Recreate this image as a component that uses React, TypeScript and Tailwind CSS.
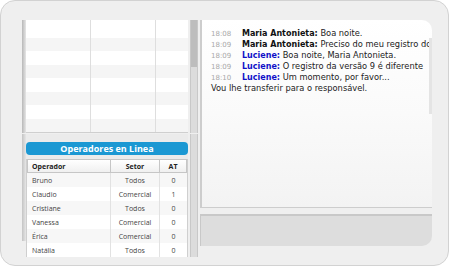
import React from 'react'

const chat = [
  { t: '18:08', name: 'Maria Antonieta:', blue: false, msg: 'Boa noite.' },
  { t: '18:09', name: 'Maria Antonieta:', blue: false, msg: 'Preciso do meu registro do sistema' },
  { t: '18:09', name: 'Luciene:', blue: true, msg: 'Boa noite, Maria Antonieta.' },
  { t: '18:09', name: 'Luciene:', blue: true, msg: 'O registro da versão 9 é diferente' },
  { t: '18:10', name: 'Luciene:', blue: true, msg: 'Um momento, por favor...' },
]

const operadores = [
  { nome: 'Bruno', setor: 'Todos', at: 0 },
  { nome: 'Claudio', setor: 'Comercial', at: 1 },
  { nome: 'Cristiane', setor: 'Todos', at: 0 },
  { nome: 'Vanessa', setor: 'Comercial', at: 0 },
  { nome: 'Érica', setor: 'Comercial', at: 0 },
  { nome: 'Natália', setor: 'Todos', at: 0 },
]

function Scrollbar({ thumb }: { thumb: number }) {
  return (
    <div className="w-[8px] h-full shrink-0 flex flex-col bg-[#dcdcdc] border-x border-[#c8c8c8]">
      <div className="bg-[#bdbdbd]" style={{ height: thumb }} />
    </div>
  )
}

export default function App() {
  return (
    <div className="w-[450px] h-[267px] bg-white">
      <div className="w-[449px] h-[266px] rounded-[15px] border border-[#d2d2d2] bg-[#efefef] flex pt-[19px] pl-[21px] pr-[16px] pb-[19px] gap-[2px]">
        {/* left column */}
        <div className="w-[176px] shrink-0 flex flex-col">
          {/* top list */}
          <div className="h-[113px] flex gap-[2px]">
            <div className="flex-1 flex">
              <div className="w-[4px] bg-gradient-to-r from-[#b8b8b8] to-[#e6e6e6]" />
              <div className="flex-1 flex flex-col bg-white border-b border-[#cfcfcf] relative">
                <div className="h-[18px] bg-white" />
                {[0, 1, 2, 3, 4, 5, 6].map(i => (
                  <div key={i} className={i % 2 === 0 ? 'h-[13.5px] bg-[#f5f5f5]' : 'h-[13.5px] bg-white'} />
                ))}
                <div className="absolute inset-0 flex">
                  <div className="w-[65px] border-r border-[#dedede]" />
                  <div className="w-[65px] border-r border-[#dedede]" />
                </div>
              </div>
            </div>
            <Scrollbar thumb={47} />
          </div>

          {/* operadores */}
          <div className="flex-1 flex gap-[2px] pt-[1px]">
            <div className="flex-1 flex">
              <div className="w-[4px] h-[107px] bg-gradient-to-r from-[#c4c4c4] to-[#e6e6e6]" />
              <div className="flex-1 flex flex-col pt-[8px] bg-[#ebebeb]">
                <div className="h-[13px] rounded-[4px] bg-[#1b98d3] flex items-center justify-center text-white font-bold text-[9px] leading-none font-['Open_Sans',sans-serif]">
                  Operadores en Linea
                </div>
                <div className="mt-[4px] flex-1 flex flex-col bg-white border-x border-[#cfcfcf] overflow-hidden font-['Open_Sans',sans-serif] text-[7px] leading-none text-[#444]">
                  <div className="h-[14px] flex border border-[#c6c6c6] bg-gradient-to-b from-white to-[#f0f0f0] font-bold text-[#222] shrink-0">
                    <div className="w-[83px] pl-[4px] flex items-center border-r border-[#c6c6c6]">Operador</div>
                    <div className="w-[49px] flex items-center justify-center border-r border-[#c6c6c6]">Setor</div>
                    <div className="flex-1 flex items-center justify-center">AT</div>
                  </div>
                  {operadores.map((o, i) => (
                    <div key={o.nome} className={`h-[14px] flex shrink-0 ${i % 2 === 0 ? 'bg-[#f7f7f7]' : 'bg-white'}`}>
                      <div className="w-[84px] pl-[5px] flex items-center border-r border-[#e2e2e2]">{o.nome}</div>
                      <div className="w-[49px] flex items-center justify-center border-r border-[#e2e2e2]">{o.setor}</div>
                      <div className="flex-1 flex items-center justify-center">{o.at}</div>
                    </div>
                  ))}
                </div>
              </div>
            </div>
            <Scrollbar thumb={0} />
          </div>
        </div>

        {/* right column */}
        <div className="flex-1 min-w-0 flex flex-col">
          <div className="h-[190px] rounded-tr-[10px] border-l-2 border-b border-[#cdcdcd] bg-gradient-to-b from-white via-[#fafafa] to-[#f3f3f3] flex overflow-hidden">
            <div className="flex-1 min-w-0 pl-[9px] pt-[8px] font-['DejaVu_Sans',sans-serif] text-[8.3px] leading-[11px] text-[#222] overflow-hidden whitespace-nowrap">
              {chat.map((c, i) => (
                <div key={i} className="h-[11px]">
                  <span className="inline-block w-[31px] text-[#a8a8a8] text-[7px]">{c.t}</span>
                  <span className={c.blue ? 'font-bold text-[8px] text-[#1010c8]' : 'font-bold text-[8px] text-[#111]'}>{c.name}</span>{' '}
                  <span>{c.msg}</span>
                </div>
              ))}
              <div className="h-[11px]">Vou lhe transferir para o responsável.</div>
            </div>
            <div className="w-[3px] h-[76px] mt-[18px] shrink-0 bg-[#e4e4e4]" />
          </div>
          <div className="mt-[6px] h-[32px] rounded-br-[10px] border-t-2 border-l border-[#c8c8c8] bg-[#dddddd]" />
        </div>
      </div>
    </div>
  )
}
